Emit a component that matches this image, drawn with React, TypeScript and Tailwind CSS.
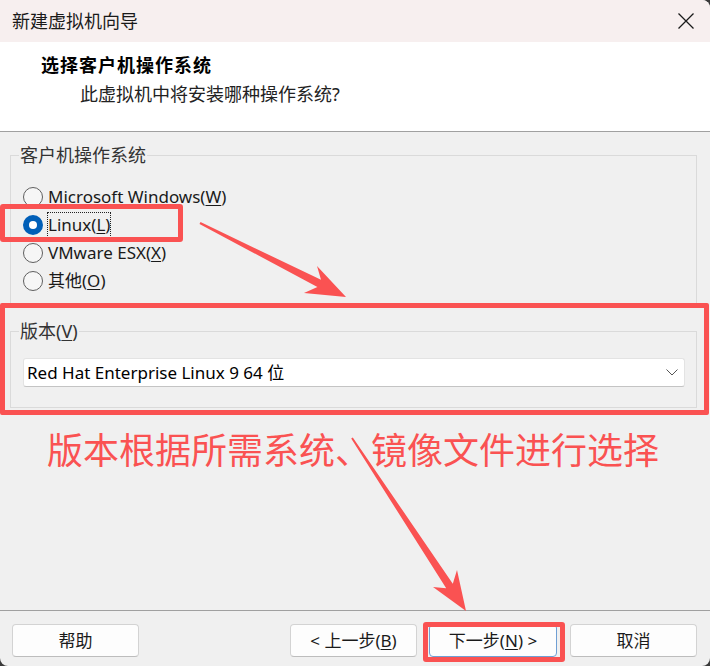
import React from "react";

const font = "font-['Noto_Sans','Noto_Sans_CJK_SC',sans-serif]";

function Radio({ checked, children }: { checked?: boolean; children: React.ReactNode }) {
  return (
    <div className="h-[28px] flex items-center gap-[5px]">
      {checked ? (
        <span className="w-[20px] h-[20px] rounded-full bg-[#005fb8] flex items-center justify-center">
          <span className="w-[8px] h-[8px] rounded-full bg-white" />
        </span>
      ) : (
        <span className="w-[20px] h-[20px] rounded-full border border-[#5f5f5f] bg-[#f6f6f6]" />
      )}
      {children}
    </div>
  );
}

function Btn({ children, primary }: { children: React.ReactNode; primary?: boolean }) {
  return (
    <button
      className={
        primary
          ? "w-[128px] h-[33px] rounded-[4px] bg-[#fdfdfd] border border-[#6f9fd4] text-[17px] text-[#1a1a1a]"
          : "w-[127px] h-[33px] rounded-[4px] bg-[#fdfdfd] border border-[#d3d3d3] border-b-[#bdbdbd] text-[17px] text-[#1a1a1a]"
      }
    >
      {children}
    </button>
  );
}

export default function App() {
  return (
    <div className={`w-[710px] h-[666px] bg-[#3a3a3a] ${font}`}>
      <div className="relative w-full h-full flex flex-col bg-[#f0f0f0] rounded-tr-[8px] rounded-b-[8px] overflow-hidden text-[#1a1a1a]">
        {/* title bar */}
        <div className="h-[42px] shrink-0 flex items-center justify-between pl-[12px] pr-[16px] bg-[#f7efef]">
          <span className="text-[18px] leading-[24px]">新建虚拟机向导</span>
          <svg width="16" height="16" viewBox="0 0 16 16" className="mt-[-1px]">
            <path d="M0.5 0.5 L15.5 15.5 M15.5 0.5 L0.5 15.5" stroke="#1a1a1a" strokeWidth="1.3" fill="none" />
          </svg>
        </div>

        {/* header */}
        <div className="h-[90px] shrink-0 bg-white border-b border-[#a0a0a0] pl-[41px] pt-[11px]">
          <div className="text-[18px] leading-[24px] font-bold tracking-[1px] text-black">选择客户机操作系统</div>
          <div className="text-[18px] leading-[24px] pl-[39px] mt-[5px] text-[#222]">此虚拟机中将安装哪种操作系统?</div>
        </div>

        {/* body */}
        <div className="flex-1 pt-[11px]">
          <fieldset className="ml-[10px] mr-[13px] border border-[#dadada] pb-[9px]">
            <legend className="ml-[8px] px-[1px] text-[18px] leading-[24px] text-[#333]">客户机操作系统</legend>
            <div className="pt-[16px] pl-[12px] text-[17px] leading-[24px]">
              <Radio>
                <span>
                  Microsoft Windows(<u className="underline-offset-2">W</u>)
                </span>
              </Radio>
              <Radio checked>
                <span className="border border-dotted border-[#222] ml-[-1px]">
                  Linux(<u className="underline-offset-2">L</u>)
                </span>
              </Radio>
              <Radio>
                <span>
                  VMware ESX(<u className="underline-offset-2">X</u>)
                </span>
              </Radio>
              <Radio>
                <span>
                  其他(<u className="underline-offset-2">O</u>)
                </span>
              </Radio>
            </div>
          </fieldset>

          <fieldset className="mt-[14px] ml-[10px] mr-[13px] border border-[#dadada] pb-[20px]">
            <legend className="ml-[8px] px-[1px] text-[18px] leading-[24px] text-[#333]">
              版本(<u className="underline-offset-2">V</u>)
            </legend>
            <div className="mt-[15px] ml-[12px] mr-[11px] h-[29px] bg-white border border-[#e3e3e3] border-b-[#c4c4c4] rounded-[3px] flex items-center justify-between pl-[3px] pr-[6px]">
              <span className="text-[17px] leading-[24px] text-black">Red Hat Enterprise Linux 9 64 位</span>
              <svg width="12" height="7" viewBox="0 0 12 7">
                <path d="M0.5 0.5 L6 6 L11.5 0.5" stroke="#555" strokeWidth="1" fill="none" />
              </svg>
            </div>
          </fieldset>

          <div className="mt-[21px] pl-[47px] text-[36px] leading-[44px] text-[#fa5252]">
            版本根据所需系统、镜像文件进行选择
          </div>
        </div>

        {/* footer */}
        <div className="h-[56px] shrink-0 border-t border-[#a0a0a0] flex items-start pt-[13px] pl-[12px] pr-[13px]">
          <Btn>帮助</Btn>
          <div className="ml-auto flex gap-[12px]">
            <Btn>
              &lt; 上一步(<u className="underline-offset-2">B</u>)
            </Btn>
            <Btn primary>
              下一步(<u className="underline-offset-2">N</u>) &gt;
            </Btn>
            <div className="ml-px">
              <Btn>取消</Btn>
            </div>
          </div>
        </div>

        {/* annotation overlay */}
        <div className="absolute left-0 top-[204px] w-[183px] h-[38px] border-[5px] border-[#fa5252] rounded-[3px]" />
        <div className="absolute left-0 top-[303px] w-[709px] h-[112px] border-[5px] border-[#fa5252] rounded-[2px]" />
        <div className="absolute left-[423px] top-[622px] w-[142px] h-[40px] border-[5px] border-[#fa5252] rounded-[3px]" />
        <svg className="absolute left-0 top-0 pointer-events-none" width="710" height="666" viewBox="0 0 710 666">
          <polygon
            points="200.5,222.1 321,279.8 317,266 346,297 304,293 317.4,287 199.5,223.9"
            fill="#fa5252"
          />
          <polygon
            points="352.8,437.5 452.8,583.8 457,570 466,611 433,587 446.2,588.2 351.2,438.5"
            fill="#fa5252"
          />
        </svg>
      </div>
    </div>
  );
}
